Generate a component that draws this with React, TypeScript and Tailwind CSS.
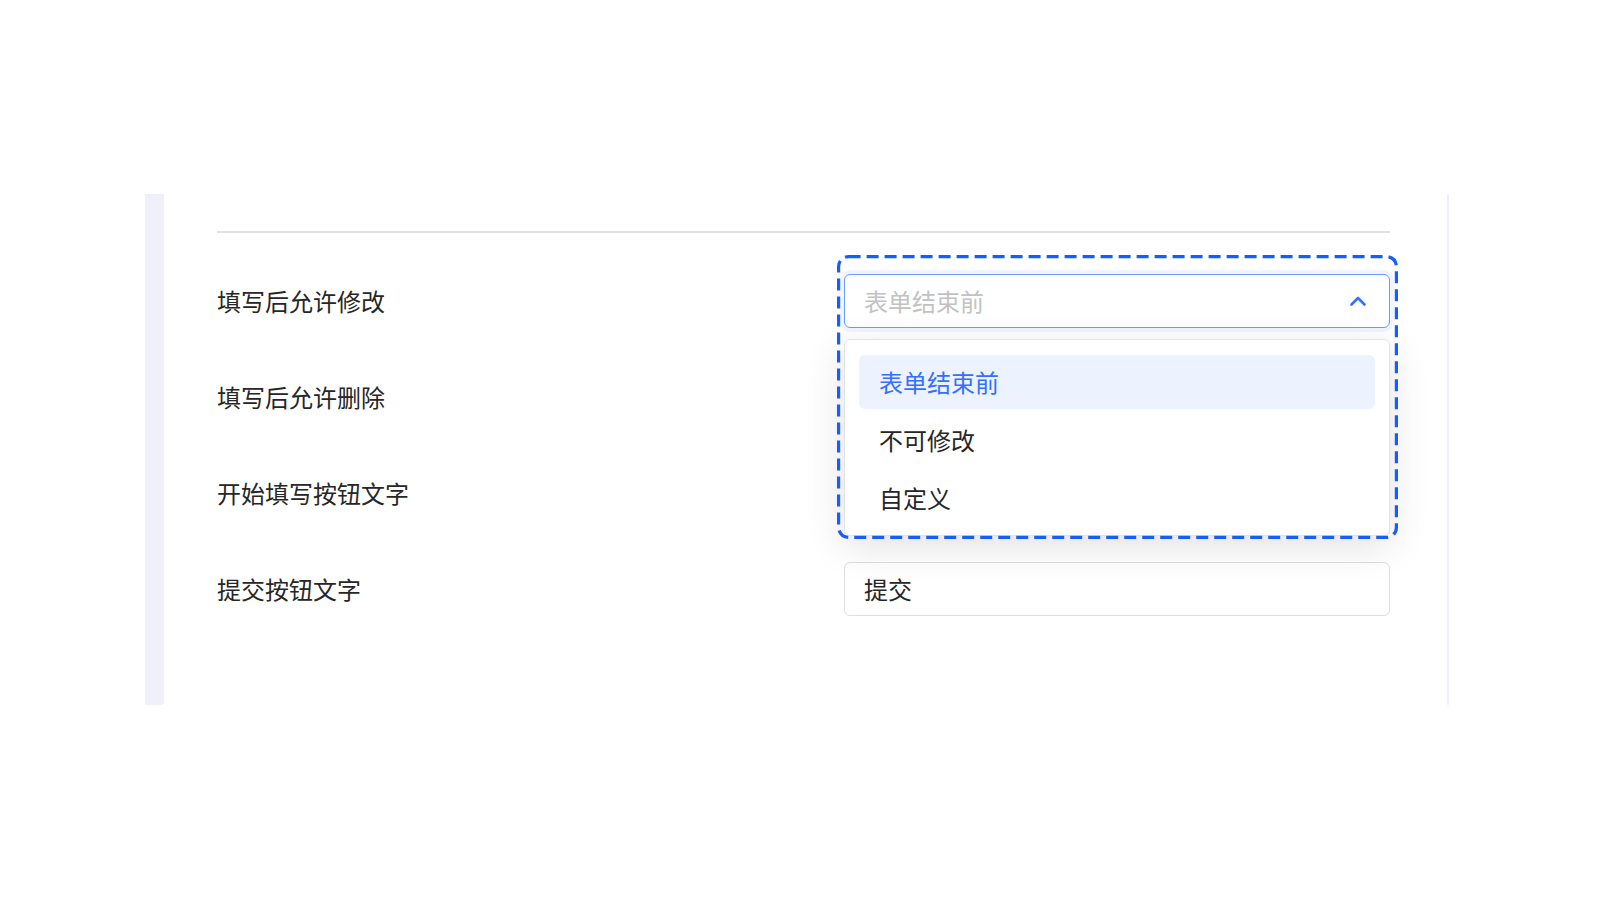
import React, { useState } from 'react';

const font = { fontFamily: '"Liberation Sans", "Noto Sans CJK SC", sans-serif' };

const options = ['表单结束前', '不可修改', '自定义'];

const rowLabels = ['填写后允许修改', '填写后允许删除', '开始填写按钮文字', '提交按钮文字'];

const App: React.FC = () => {
  const [selected] = useState(options[0]);

  return (
    <div className="min-h-[900px] w-full bg-white pt-[194px] pl-[145px]" style={font}>
      <div className="flex h-[511px] w-[1304px]">
        <div className="w-[19px] rounded-br-[3px] bg-[#f0f0fa]" />
        <div className="flex-1 border-r-[2px] border-[#f0f0f8] pl-[53px] pr-[57px] pt-[37px]">
          <div className="h-[2px] bg-[#e2e2e2]" />

          <div className="mt-[41px] grid grid-cols-[627px_1fr] gap-y-[42px]">
            {/* row 1 - open select */}
            <div className="flex h-[54px] items-center pt-[4px] text-[24px] text-[#262626]">{rowLabels[0]}</div>
            <div className="relative h-[54px]">
              <div className="flex h-full items-center justify-between rounded-[6px] border border-[#6d9cf8] bg-white px-[19px] shadow-[0_0_0_4px_rgba(77,124,254,0.08)]">
                <span className="pt-[4px] text-[24px] text-[#c2c2c2]">{selected}</span>
                <svg width="16" height="10" viewBox="0 0 16 10" className="mr-[4px]">
                  <path d="M1.5 8.5 8 2l6.5 6.5" fill="none" stroke="#3370ff" strokeWidth="2.6" strokeLinecap="round" strokeLinejoin="round" />
                </svg>
              </div>

              <div className="absolute left-0 right-0 top-[65px] z-10 rounded-[6px] border border-[#e3e3e3] bg-white px-[14px] pt-[15px] pb-[10px] shadow-[0_10px_40px_rgba(0,0,0,0.12)]">
                <div className="flex flex-col gap-[4px]">
                  {options.map((o) => (
                    <div
                      key={o}
                      className={
                        o === selected
                          ? 'flex h-[54px] items-center rounded-[6px] bg-[#edf2ff] px-[20px] pt-[4px] text-[24px] text-[#3370ff]'
                          : 'flex h-[54px] items-center rounded-[6px] px-[20px] pt-[4px] text-[24px] text-[#262626]'
                      }
                    >
                      {o}
                    </div>
                  ))}
                </div>
              </div>

              {/* dashed highlight annotation */}
              <svg className="pointer-events-none absolute left-[-7px] top-[-19px] z-20" width="561" height="284" viewBox="0 0 561 284">
                <rect x="1.6" y="1.6" width="557.8" height="280.8" rx="10" fill="none" stroke="#165dff" strokeWidth="3.2" strokeDasharray="12 6" />
              </svg>
            </div>

            {/* row 2 */}
            <div className="flex h-[54px] items-center pt-[4px] text-[24px] text-[#262626]">{rowLabels[1]}</div>
            <div className="h-[54px]" />

            {/* row 3 */}
            <div className="flex h-[54px] items-center pt-[4px] text-[24px] text-[#262626]">{rowLabels[2]}</div>
            <div className="h-[54px]" />

            {/* row 4 */}
            <div className="flex h-[54px] items-center pt-[4px] text-[24px] text-[#262626]">{rowLabels[3]}</div>
            <div className="flex h-[54px] items-center rounded-[6px] border border-[#dedede] bg-white px-[19px] pt-[4px] text-[24px] text-[#262626]">
              提交
            </div>
          </div>
        </div>
      </div>
    </div>
  );
};

export default App;
